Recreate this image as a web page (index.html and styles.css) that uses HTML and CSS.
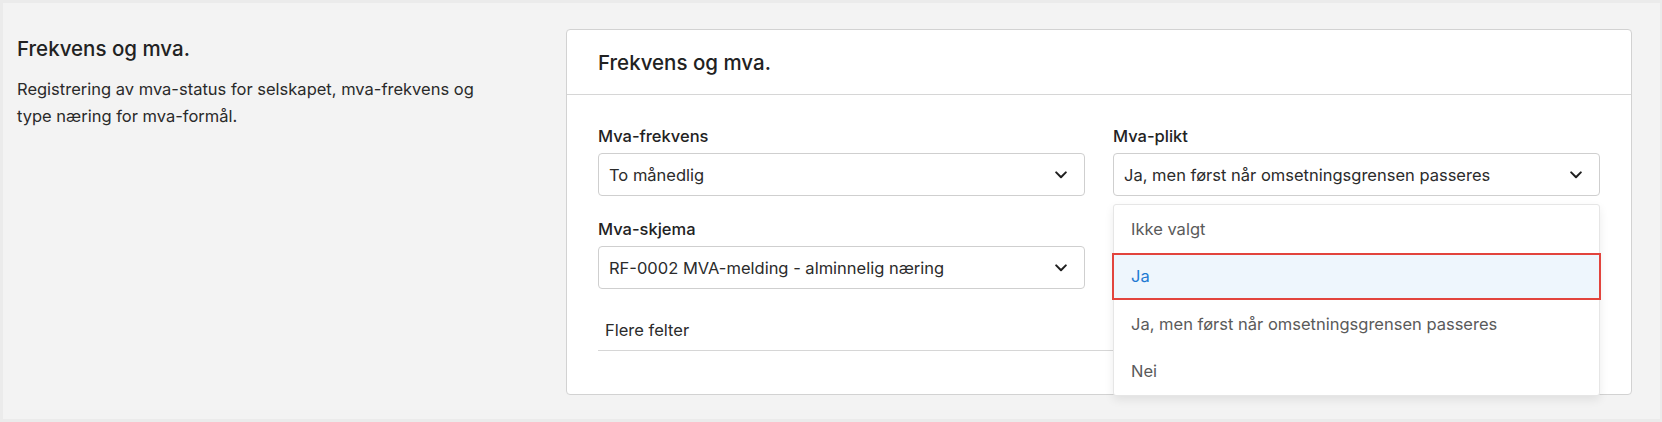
FILE: index.html
```html
<!DOCTYPE html>
<html lang="no">
<head>
<meta charset="utf-8">
<title>Frekvens og mva.</title>
<link rel="stylesheet" href="styles.css">
</head>
<body>
<div class="page">
  <aside class="intro">
    <h2 class="intro-title">Frekvens og mva.</h2>
    <p class="intro-text">Registrering av mva-status for selskapet, mva-frekvens og type næring for mva-formål.</p>
  </aside>
  <section class="card">
    <header class="card-header">
      <h3 class="card-title">Frekvens og mva.</h3>
    </header>
    <div class="card-body">
      <div class="fields">
        <div class="field">
          <label class="field-label">Mva-frekvens</label>
          <div class="select">
            <span class="select-value">To månedlig</span>
            <svg class="chevron" width="12" height="8" viewBox="0 0 12 8"><path d="M1.2 1.4 6 6.2 10.8 1.4" fill="none" stroke="#1f1f1f" stroke-width="2" stroke-linecap="round" stroke-linejoin="round"/></svg>
          </div>
        </div>
        <div class="field field-open">
          <label class="field-label">Mva-plikt</label>
          <div class="select">
            <span class="select-value">Ja, men først når omsetningsgrensen passeres</span>
            <svg class="chevron" width="12" height="8" viewBox="0 0 12 8"><path d="M1.2 1.4 6 6.2 10.8 1.4" fill="none" stroke="#1f1f1f" stroke-width="2" stroke-linecap="round" stroke-linejoin="round"/></svg>
          </div>
          <ul class="menu">
            <li class="menu-item">Ikke valgt</li>
            <li class="menu-item is-active">Ja</li>
            <li class="menu-item">Ja, men først når omsetningsgrensen passeres</li>
            <li class="menu-item">Nei</li>
          </ul>
        </div>
        <div class="field">
          <label class="field-label">Mva-skjema</label>
          <div class="select">
            <span class="select-value">RF-0002 MVA-melding - alminnelig næring</span>
            <svg class="chevron" width="12" height="8" viewBox="0 0 12 8"><path d="M1.2 1.4 6 6.2 10.8 1.4" fill="none" stroke="#1f1f1f" stroke-width="2" stroke-linecap="round" stroke-linejoin="round"/></svg>
          </div>
        </div>
      </div>
      <div class="more">Flere felter</div>
    </div>
  </section>
</div>
</body>
</html>
```

FILE: styles.css
```css
* { box-sizing: border-box; }

html, body {
  margin: 0;
  padding: 0;
}

body {
  background: #ebebeb;
  padding: 3px 2px 3px 3px;
  font-family: "Inter", "Lato", "Liberation Sans", sans-serif;
  color: #262626;
}

.page {
  background: #f3f3f3;
  height: 416px;
  display: flex;
  padding: 26px 28px 0 14px;
}

.intro {
  flex: 0 0 549px;
  padding-top: 7px;
}

.intro-title {
  margin: 0;
  font-size: 20.5px;
  line-height: 26px;
  font-weight: 500;
  color: #222;
}

.intro-text {
  margin: 14px 0 0;
  width: 482px;
  font-size: 16.5px;
  line-height: 27px;
  color: #2a2a2a;
}

.card {
  flex: 1;
  height: 366px;
  background: #fff;
  border: 1px solid #d2d2d2;
  border-radius: 4px;
  display: flex;
  flex-direction: column;
}

.card-header {
  height: 65px;
  border-bottom: 1px solid #d6d6d6;
  display: flex;
  align-items: center;
  padding: 0 31px;
}

.card-title {
  margin: 0;
  font-size: 20.5px;
  font-weight: 500;
  color: #222;
}

.card-body {
  padding: 31px 31px 0;
}

.fields {
  display: grid;
  grid-template-columns: 1fr 1fr;
  column-gap: 28px;
  row-gap: 23px;
}

.field {
  position: relative;
}

.field-label {
  display: block;
  font-size: 16.5px;
  line-height: 20px;
  font-weight: 500;
  color: #222;
  margin-bottom: 7px;
}

.select {
  height: 43px;
  border: 1px solid #cfcfcf;
  border-radius: 4px;
  display: flex;
  align-items: center;
  justify-content: space-between;
  padding: 0 17px 0 10px;
  font-size: 16.5px;
  color: #2b2b2b;
}

.chevron { display: block; }

.menu {
  position: absolute;
  left: 0;
  right: 0;
  top: 78px;
  margin: 0;
  padding: 0;
  list-style: none;
  background: #fff;
  border: 1px solid #e6e6e6;
  border-radius: 3px;
  box-shadow: 0 4px 10px rgba(0, 0, 0, 0.08);
  z-index: 2;
}

.menu-item {
  height: 47.5px;
  display: flex;
  align-items: center;
  padding: 0 17px;
  font-size: 16.5px;
  color: #5a5a5a;
  position: relative;
}

.menu-item.is-active {
  background: #eef6fd;
  color: #1f7ad3;
}

.menu-item.is-active::after {
  content: "";
  position: absolute;
  top: 0;
  bottom: 0;
  left: -2px;
  right: -2px;
  border: 2px solid #e2443d;
}

.more {
  margin-top: 22px;
  height: 40px;
  padding: 0 7px 2px;
  display: flex;
  align-items: center;
  font-size: 16.5px;
  color: #2b2b2b;
  border-bottom: 1px solid #d6d6d6;
}
```
